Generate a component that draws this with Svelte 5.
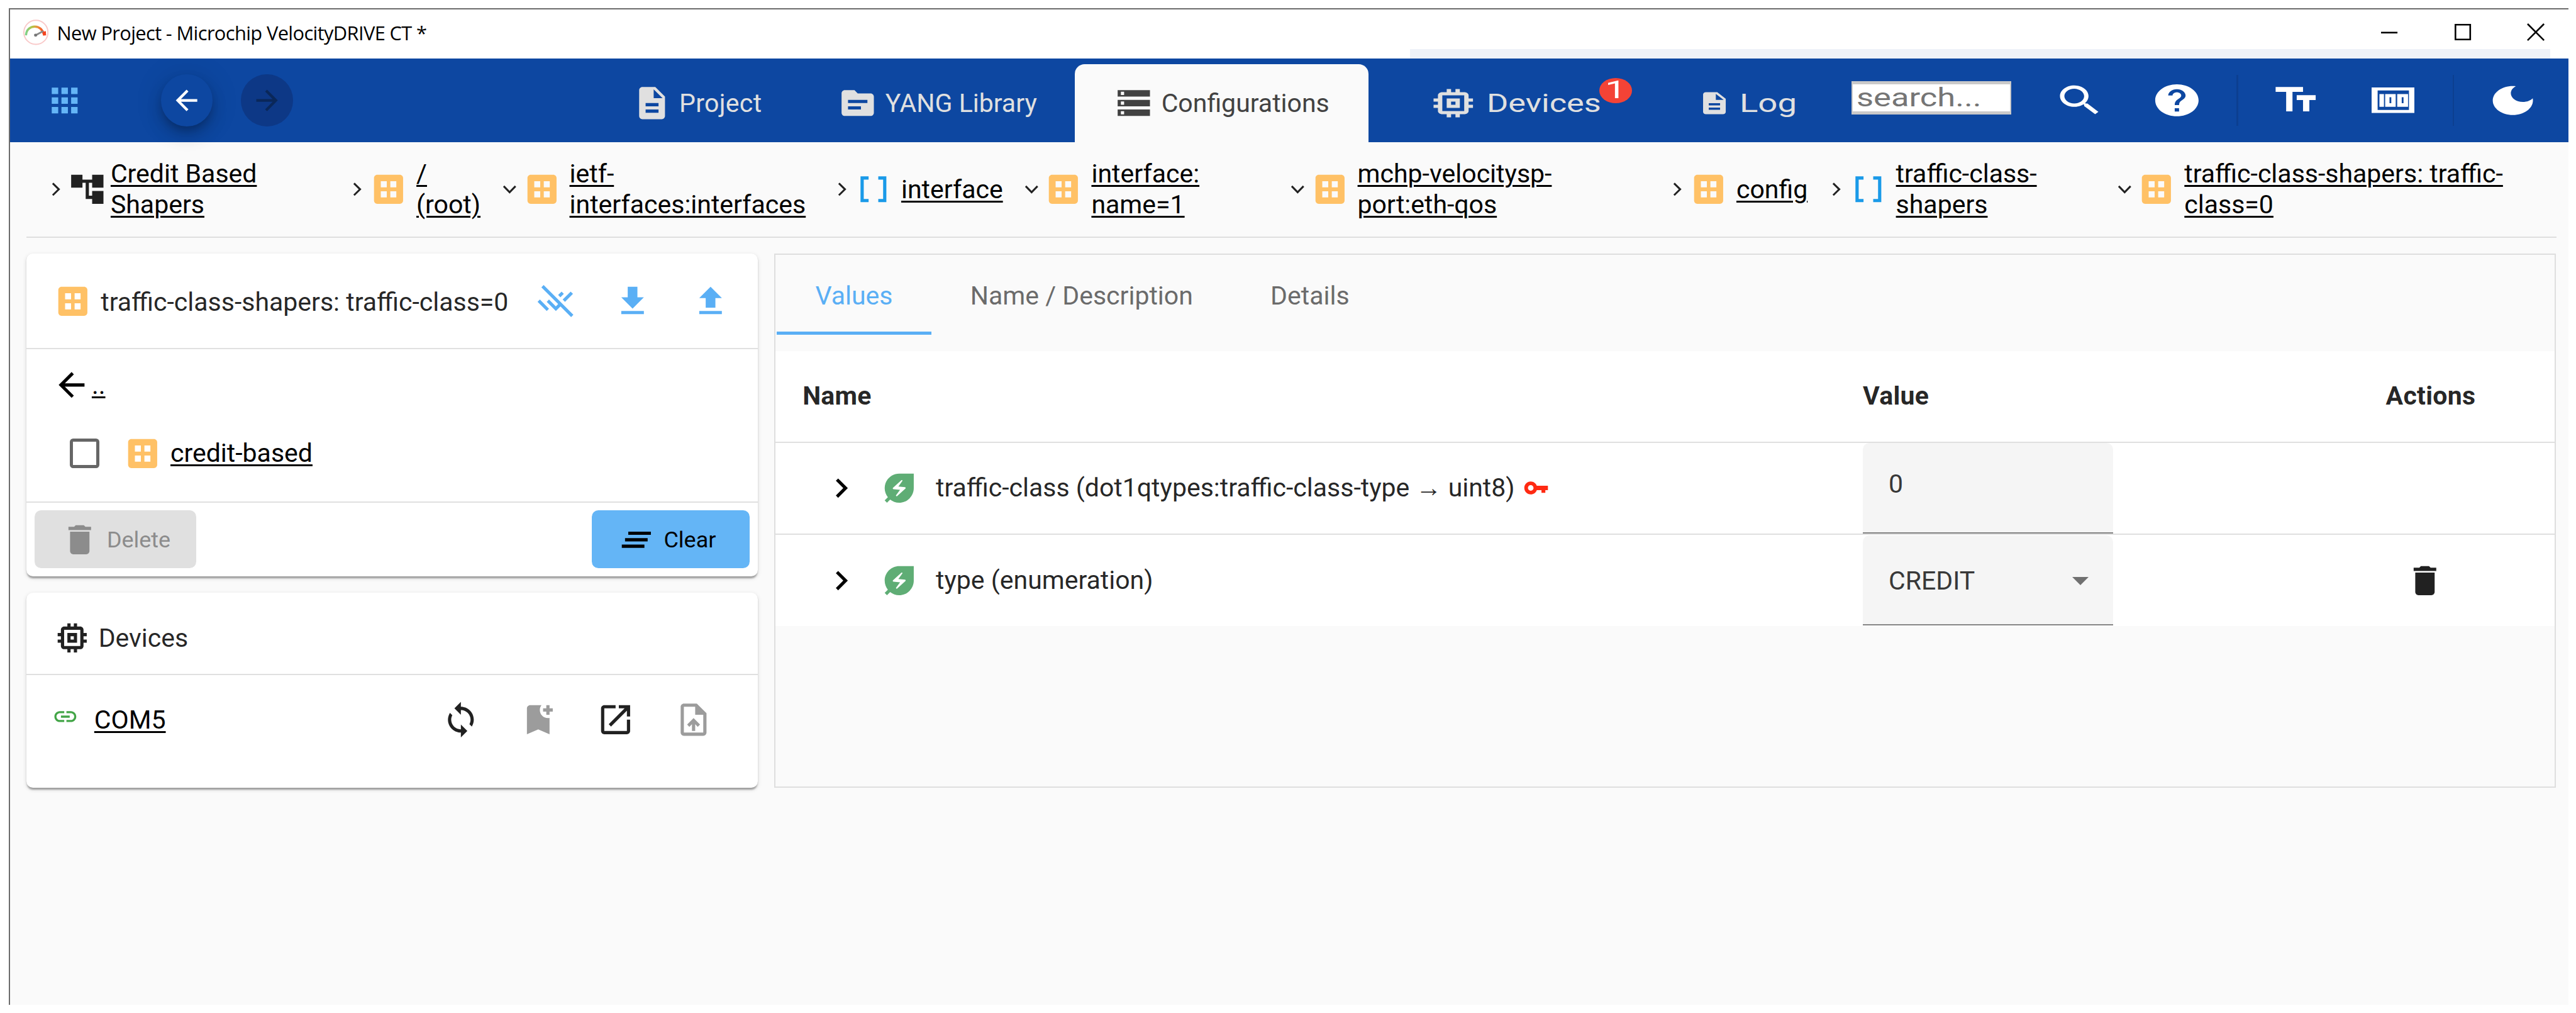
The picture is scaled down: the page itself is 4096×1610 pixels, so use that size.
<script>
  const icons = {
    apps: 'M4 8h4V4H4v4zm6 12h4v-4h-4v4zm-6 0h4v-4H4v4zm0-6h4v-4H4v4zm6 0h4v-4h-4v4zm6-10v4h4V4h-4zm-6 4h4V4h-4v4zm6 6h4v-4h-4v4zm0 6h4v-4h-4v4z',
    back: 'M20 11H7.83l5.59-5.59L12 4l-8 8 8 8 1.41-1.41L7.83 13H20v-2z',
    forward: 'M12 4l-1.41 1.41L16.17 11H4v2h12.17l-5.58 5.59L12 20l8-8z',
    description: 'M14 2H6c-1.1 0-1.99.9-1.99 2L4 20c0 1.1.89 2 1.99 2H18c1.1 0 2-.9 2-2V8l-6-6zm2 16H8v-2h8v2zm0-4H8v-2h8v2zm-3-5V3.5L18.5 9H13z',
    topic: 'M20 6h-8l-2-2H4c-1.1 0-1.99.9-1.99 2L2 18c0 1.1.9 2 2 2h16c1.1 0 2-.9 2-2V8c0-1.1-.9-2-2-2zm-6 10H6v-2h8v2zm4-4H6v-2h12v2z',
    storage: 'M2 20h20v-4H2v4zm2-3h2v2H4v-2zM2 4v4h20V4H2zm4 3H4V5h2v2zm-4 7h20v-4H2v4zm2-3h2v2H4v-2z',
    memory: 'M15 9H9v6h6V9zm-2 4h-2v-2h2v2zm8-2V9h-2V7c0-1.1-.9-2-2-2h-2V3h-2v2h-2V3H9v2H7c-1.1 0-2 .9-2 2v2H3v2h2v2H3v2h2v2c0 1.1.9 2 2 2h2v2h2v-2h2v2h2v-2h2c1.1 0 2-.9 2-2v-2h2v-2h-2v-2h2zm-4 6H7V7h10v10z',
    search: 'M15.5 14h-.79l-.28-.27C15.41 12.59 16 11.11 16 9.5 16 5.91 13.09 3 9.5 3S3 5.91 3 9.5 5.91 16 9.5 16c1.61 0 3.09-.59 4.23-1.57l.27.28v.79l5 4.99L20.49 19l-4.99-5zm-6 0C7.01 14 5 11.99 5 9.5S7.01 5 9.5 5 14 7.01 14 9.5 11.99 14 9.5 14z',
    help: 'M12 2C6.48 2 2 6.48 2 12s4.48 10 10 10 10-4.48 10-10S17.52 2 12 2zm1 17h-2v-2h2v2zm2.07-7.75l-.9.92C13.45 12.9 13 13.5 13 15h-2v-.5c0-1.1.45-2.1 1.17-2.83l1.24-1.26c.37-.36.59-.86.59-1.41 0-1.1-.9-2-2-2s-2 .9-2 2H8c0-2.21 1.79-4 4-4s4 1.79 4 4c0 .88-.36 1.68-.93 2.25z',
    textsize: 'M2.5 4v3h5v12h3V7h5V4h-13zm19 5h-9v3h3v7h3v-7h3V9z',
    moon: 'M12 3c-4.97 0-9 4.03-9 9s4.03 9 9 9 9-4.03 9-9c0-.46-.04-.92-.1-1.36-.98 1.37-2.58 2.26-4.4 2.26-2.98 0-5.4-2.42-5.4-5.4 0-1.81.89-3.42 2.26-4.4-.44-.06-.9-.1-1.36-.1z',
    tree: 'M22 11V3h-7v3H9V3H2v8h7V8h2v10h4v3h7v-8h-7v3h-2V8h2v3z',
    container: 'M5 3h14c1.1 0 2 .9 2 2v14c0 1.1-.9 2-2 2H5c-1.1 0-2-.9-2-2V5c0-1.1.9-2 2-2zM7.2 7v3.8h3.7V7zm5.9 0v3.8h3.7V7zM7.2 13.2V17h3.7v-3.8zm5.9 0V17h3.7v-3.8z',
    list: 'M15 4v2h3v12h-3v2h5V4zM4 20h5v-2H6V6h3V4H4z',
    uncheck: 'M4.84 1.98L3.43 3.39l10.38 10.38-1.41 1.41-4.24-4.24-1.41 1.41 5.66 5.66 2.83-2.83 6.6 6.6 1.41-1.41zM18.05 12.36L23 7.4 21.57 6l-4.94 4.94zM17.34 7.4l-1.41-1.41-2.12 2.12 1.41 1.41zM1.08 12.35l5.66 5.66 1.41-1.41L2.49 10.94z',
    download: 'M5 20h14v-2H5v2zM19 9.5h-4V3H9v6.5H5l7 7z',
    upload: 'M5 20h14v-2H5v2zM5 10h4v6h6v-6h4l-7-7z',
    trash: 'M6 19c0 1.1.9 2 2 2h8c1.1 0 2-.9 2-2V7H6v12zM19 4h-3.5l-1-1h-5l-1 1H5v2h14V4z',
    clear: 'M5 13h14v-2H5v2zm-2 4h14v-2H3v2zM7 7v2h14V7H7z',
    link: 'M3.9 12c0-1.71 1.39-3.1 3.1-3.1h4V7H7c-2.76 0-5 2.24-5 5s2.24 5 5 5h4v-1.9H7c-1.71 0-3.1-1.39-3.1-3.1zM8 13h8v-2H8v2zm9-6h-4v1.9h4c1.71 0 3.1 1.39 3.1 3.1s-1.39 3.1-3.1 3.1h-4V17h4c2.76 0 5-2.24 5-5s-2.24-5-5-5z',
    sync: 'M12 4V1L8 5l4 4V6c3.31 0 6 2.69 6 6 0 1.01-.25 1.97-.7 2.8l1.46 1.46C19.54 15.03 20 13.57 20 12c0-4.42-3.58-8-8-8zm0 14c-3.31 0-6-2.69-6-6 0-1.01.25-1.97.7-2.8L5.24 7.74C4.46 8.97 4 10.43 4 12c0 4.42 3.58 8 8 8v3l4-4-4-4v3z',
    bookmark: 'M21 7h-2v2h-2V7h-2V5h2V3h2v2h2v2zM19 21l-7-3-7 3V5c0-1.1.9-2 2-2h7c-.63.84-1 1.87-1 3 0 2.76 2.24 5 5 5 .34 0 .68-.03 1-.1V21z',
    open: 'M19 19H5V5h7V3H5c-1.11 0-2 .9-2 2v14c0 1.1.89 2 2 2h14c1.1 0 2-.9 2-2v-7h-2v7zM14 3v2h3.59l-9.83 9.83 1.41 1.41L19 6.41V10h2V3h-7z',
    file: 'M14 2H6c-1.1 0-1.99.9-1.99 2L4 20c0 1.1.89 2 1.99 2H18c1.1 0 2-.9 2-2V8l-6-6zm4 18H6V4h7v5h5v11zM8 15.01l1.41 1.41L11 14.84V19h2v-4.16l1.59 1.59L16 15.01 12.01 11z',
    right: 'M8.59 16.59L13.17 12 8.59 7.41 10 6l6 6-6 6z',
    leaf: 'M12 3c-4.8 0-9 3.86-9 9 0 2.12.74 4.07 1.97 5.61L3 19.59 4.41 21l1.97-1.97C7.93 20.26 9.88 21 12 21c2.3 0 4.61-.88 6.36-2.64C20.12 16.61 21 14.3 21 12V3h-9zm3.83 9.26l-5.16 4.63c-.16.15-.41.14-.56-.01-.14-.14-.16-.36-.04-.52l2.44-3.33-4.05-.4c-.44-.04-.63-.59-.3-.89l5.16-4.63c.16-.15.41-.14.56.01.14.14.16.36.04.52l-2.44 3.33 4.05.4c.45.04.63.59.3.89z',
    key: 'M12.65 10C11.83 7.67 9.61 6 7 6c-3.31 0-6 2.69-6 6s2.69 6 6 6c2.61 0 4.83-1.67 5.65-4H17v2.6h3.6V14H23v-4H12.65zM7 14.6c-1.4 0-2.6-1.2-2.6-2.6s1.2-2.6 2.6-2.6 2.6 1.2 2.6 2.6-1.2 2.6-2.6 2.6z'
  };

  const crumbs = [
    { icon: 'tree', lines: ['Credit Based', 'Shapers'] },
    { icon: 'container', lines: ['/', '(root)'] },
    { icon: 'container', open: true, lines: ['ietf-', 'interfaces:interfaces'] },
    { icon: 'list', lines: ['interface'] },
    { icon: 'container', open: true, lines: ['interface:', 'name=1'] },
    { icon: 'container', open: true, lines: ['mchp-velocitysp-', 'port:eth-qos'] },
    { icon: 'container', lines: ['config'] },
    { icon: 'list', lines: ['traffic-class-', 'shapers'] },
    { icon: 'container', open: true, lines: ['traffic-class-shapers: traffic-', 'class=0'] }
  ];
</script>

{#snippet icon(name, cls = '')}
  <svg class="icon {cls}" viewBox="0 0 24 24" preserveAspectRatio="none" aria-hidden="true">
    <path fill-rule="evenodd" d={icons[name]} />
  </svg>
{/snippet}

<div class="window">
  <div class="titlebar">
    <svg class="logo" viewBox="0 0 42 42" aria-hidden="true">
      <defs>
        <linearGradient id="dial" x1="0" x2="1" y1="0" y2="0">
          <stop offset="0" stop-color="#7fd08a" />
          <stop offset=".35" stop-color="#b5c443" />
          <stop offset=".65" stop-color="#f08a3c" />
          <stop offset="1" stop-color="#f4431f" />
        </linearGradient>
      </defs>
      <circle cx="21" cy="21" r="20" fill="#fff" stroke="#f9c9c9" stroke-width="2" />
      <path d="M4.5 26C5 16 12 11.5 19 11.5S32 16 35 26" fill="none" stroke="url(#dial)" stroke-width="3.6" />
      <path d="M32.5 20l5 -1 .5 7h-5z" fill="#f4431f" />
      <path d="M20 26L33 19" stroke="#8a8a8a" stroke-width="3" />
      <circle cx="20.5" cy="25.7" r="2.6" fill="#777" />
    </svg>
    <span class="title">New Project - Microchip VelocityDRIVE CT *</span>
    <div class="controls">
      <svg viewBox="0 0 10 10"><path d="M0 5.3h10" /></svg>
      <svg viewBox="0 0 10 10"><path d="M.5.5h9v9h-9z" /></svg>
      <svg viewBox="0 0 10 10"><path d="M0 0l10 10M10 0L0 10" /></svg>
    </div>
    <div class="strip"></div>
  </div>

  <header>
    {@render icon('apps', 'apps')}
    <button class="round">{@render icon('back', 'nav')}</button>
    <button class="round off">{@render icon('forward', 'nav')}</button>
    <nav>
      <div class="tab project">{@render icon('description')}<span>Project</span></div>
      <div class="tab yang">{@render icon('topic')}<span>YANG Library</span></div>
      <div class="tab active">{@render icon('storage')}<span>Configurations</span></div>
      <div class="tab devices">
        {@render icon('memory', 'chip')}<span>Devices</span>
        <div class="badge"><b>1</b></div>
      </div>
      <div class="tab log">{@render icon('description', 'sheet')}<span>Log</span></div>
    </nav>
    <div class="search"><span>search...</span></div>
    {@render icon('search', 'find')}
    {@render icon('help', 'help')}
    <i class="rule"></i>
    {@render icon('textsize', 'textsize')}
    <svg class="counter" viewBox="0 0 72 42" preserveAspectRatio="none" aria-hidden="true">
      <path fill-rule="evenodd" d="M0 0h72v42H0zM10 5v32h52V5zM13 11h7.5v21H13zM22.5 11H40v21H22.5zM29.7 16v10h3V16zM42.5 11H60.5v21H42.5zM50 16v10h3V16z" />
    </svg>
    <i class="rule second"></i>
    {@render icon('moon', 'moon')}
  </header>

  <div class="crumbs">
    {#each crumbs as c}
      <div class="crumb">
        <svg class="caret" class:open={c.open} viewBox="0 0 15 15" aria-hidden="true"><path d="M5.7 4L9.4 7.6 5.7 11.2" /></svg>
        {@render icon(c.icon, c.icon)}
        <a class:tight={c.icon === 'tree'}>{#each c.lines as line}<span>{line}</span>{/each}</a>
      </div>
    {/each}
  </div>

  <main>
    <aside>
      <section class="card">
        <div class="head">
          {@render icon('container', 'container')}
          <span class="label">traffic-class-shapers: traffic-class=0</span>
          <div class="tools">
            {@render icon('uncheck', 'blue')}
            {@render icon('download', 'blue')}
            {@render icon('upload', 'blue')}
          </div>
        </div>
        <div class="body">
          <div class="up">{@render icon('back')}<a>..</a></div>
          <div class="entry"><i class="check"></i>{@render icon('container', 'container')}<a>credit-based</a></div>
        </div>
        <div class="foot">
          <button class="btn delete">{@render icon('trash')}Delete</button>
          <button class="btn clear">{@render icon('clear')}Clear</button>
        </div>
      </section>
      <section class="card second">
        <div class="head">{@render icon('memory')}<span>Devices</span></div>
        <div class="device">
          {@render icon('link', 'link')}
          <a>COM5</a>
          <div class="actions">
            {@render icon('sync')}
            {@render icon('bookmark', 'dim')}
            {@render icon('open')}
            {@render icon('file', 'dim')}
          </div>
        </div>
      </section>
    </aside>

    <section class="panel">
      <div class="tabs">
        <div class="on">Values</div>
        <div>Name / Description</div>
        <div>Details</div>
      </div>
      <div class="table">
        <div class="row th"><div class="name">Name</div><div>Value</div><div class="act">Actions</div></div>
        <div class="row">
          <div class="name">
            {@render icon('right', 'chev')}{@render icon('leaf', 'leaf')}
            <span>traffic-class (dot1qtypes:traffic-class-type → uint8)</span>
            {@render icon('key', 'key')}
          </div>
          <div><div class="field raised">0</div></div>
          <div class="act"></div>
        </div>
        <div class="row last">
          <div class="name">
            {@render icon('right', 'chev')}{@render icon('leaf', 'leaf')}
            <span>type (enumeration)</span>
          </div>
          <div><div class="field">CREDIT<i class="drop"></i></div></div>
          <div class="act remove">{@render icon('trash')}</div>
        </div>
      </div>
    </section>
  </main>
</div>

<style>
  :global(html) { font-size: 0.63776vw; }
  :global(body) { margin: 0; background: #fff; overflow: hidden; }
  .window, .window * { box-sizing: border-box; }
  .window {
    width: 155.8rem; height: 60.64rem; margin: .5rem 0 0 .53rem;
    border-top: .1rem solid #6c6c6c; border-left: .1rem solid #6c6c6c;
    background: #fafafa; color: rgba(0, 0, 0, .87);
    font: 400 1.57rem/1.87rem Roboto, "Liberation Sans", sans-serif;
    white-space: nowrap; display: flex; flex-direction: column;
  }
  button { font: inherit; border: 0; padding: 0; }
  .icon { width: 2.36rem; height: 2.36rem; fill: currentColor; flex: none; display: block; }
  a { color: #000; text-decoration: underline; text-decoration-thickness: .1rem; text-underline-offset: .14rem; }

  .titlebar { height: 2.98rem; background: #fff; display: flex; align-items: center; position: relative; padding-left: .82rem; flex: none; }
  .logo { width: 1.54rem; height: 1.56rem; margin-top: -.2rem; }
  .title { font: 1.18rem/1.6rem "Open Sans", "Noto Sans", sans-serif; letter-spacing: -.024rem; color: #000; margin: -.06rem 0 0 .5rem; }
  .controls { margin-left: auto; display: flex; gap: 3.46rem; margin-right: 1.48rem; margin-top: -.24rem; }
  .controls svg { width: 1rem; height: 1rem; stroke: #000; fill: none; overflow: visible; }
  .strip { position: absolute; bottom: 0; right: 1.1rem; width: 69.4rem; height: .56rem; background: #eef2f8; }

  header { height: 5.09rem; flex: none; background: #0d47a1; color: #fff; display: flex; align-items: center; padding-left: 2.16rem; }
  .apps { color: #64b5f6; }
  .round { width: 3.15rem; height: 3.15rem; border-radius: 50%; margin-left: 4.66rem; background: #0d47a1; color: #fff; display: grid; place-items: center; flex: none;
    box-shadow: 0 .3rem .5rem -.1rem rgba(0, 0, 0, .2), 0 .6rem 1rem rgba(0, 0, 0, .14), 0 .1rem 1.8rem rgba(0, 0, 0, .12); }
  .round.off { margin-left: 1.74rem; background: #0d3886; color: #0a2759; box-shadow: none; }
  .nav { width: 1.96rem; height: 1.96rem; }
  nav { display: flex; align-self: flex-end; margin-left: 18.3rem; height: 4.73rem; color: #e0e0e0; }
  .tab { display: flex; align-items: center; padding-left: 2.4rem; flex: none; position: relative; }
  .tab span { margin-left: .5rem; transform-origin: left; }
  .project { width: 12.51rem; }
  .project span { letter-spacing: .012rem; margin-left: .46rem; }
  .yang { width: 16.8rem; }
  .active { width: 17.88rem; background: #fafafa; color: #424242; border-radius: .6rem .6rem 0 0; }
  .devices { width: 20rem; padding-left: 3.55rem; }
  .chip { width: 3.2rem; height: 2.3rem; }
  .devices span { transform: scaleX(1.275); margin-left: .42rem; }
  .badge { position: absolute; left: 14.02rem; top: .83rem; width: 2rem; height: 1.53rem; border-radius: 50%; background: #f44336; color: #fff; display: grid; place-items: center; }
  .badge b { font: 400 1.48rem/1.53rem Roboto, sans-serif; transform: translateY(-.04rem) scaleX(1.55); }
  .log { width: 9.37rem; padding-left: 0; }
  .sheet { width: 2.07rem; height: 1.61rem; }
  .log span { transform: scaleX(1.33); margin-left: .49rem; }
  .search { width: 9.73rem; height: 2.03rem; margin-top: -.27rem; background: #fff; border: .18rem solid #c9c9c9; border-width: .22rem .1rem .2rem; padding-left: .25rem; color: #757575; line-height: 1.62rem; }
  .search span { display: inline-block; transform: scaleX(1.28); transform-origin: left; }
  .find { width: 3.21rem; height: 2.4rem; margin-left: 2.56rem; }
  .help { width: 3.17rem; height: 2.33rem; margin-left: 2.74rem; }
  .rule { width: .1rem; height: 3.1rem; background: #0c3f90; margin-left: 2.04rem; }
  .textsize { width: 3.08rem; height: 2.37rem; margin-left: 1.97rem; }
  .counter { width: 2.64rem; height: 1.55rem; fill: #fff; margin-left: 3.06rem; }
  .rule.second { margin-left: 2.3rem; }
  .moon { width: 3.26rem; height: 2.35rem; margin-left: 1.96rem; }

  .crumbs { height: 5.83rem; flex: none; margin: 0 .7rem 0 1rem; border-bottom: .1rem solid #dedede; display: grid; align-items: center;
    grid-template-columns: 18.33rem 9.32rem 20.19rem 11.58rem 16.2rem 23.06rem 9.71rem 17.56rem 1fr; padding-left: 1.04rem; }
  .crumb { display: flex; align-items: center; }
  .crumb a { display: flex; flex-direction: column; align-items: flex-start; margin-left: .51rem; line-height: 1.865rem; }
  .crumb a span { text-decoration: underline; text-decoration-thickness: .1rem; text-underline-offset: .14rem; }
  .crumb a { text-decoration: none; }
  .crumb a.tight { margin-left: .23rem; }
  .caret { width: 1.5rem; height: 1.5rem; fill: none; stroke: #222; stroke-width: 1.15; flex: none; }
  .caret.open { transform: rotate(90deg); }
  .container { color: #ffc166; }
  .list { color: #1a9ae8; }

  main { display: flex; margin: .95rem .74rem 0 .99rem; height: 32.5rem; }
  aside { width: 44.52rem; flex: none; display: flex; flex-direction: column; gap: .98rem; }
  .card { background: #fff; border-radius: .4rem; height: 19.67rem;
    box-shadow: 0 .2rem .1rem -.1rem rgba(0, 0, 0, .2), 0 .1rem .1rem rgba(0, 0, 0, .14), 0 .1rem .3rem rgba(0, 0, 0, .12); }
  .card .head { height: 5.82rem; border-bottom: .1rem solid #e0e0e0; display: flex; align-items: center; padding: .08rem 0 0 1.66rem; }
  .card .label { margin: .08rem 0 0 .52rem; }
  .tools { display: flex; gap: 2.38rem; margin-left: 1.65rem; }
  .blue { color: #5aaff5; }
  .body { height: 9.34rem; border-bottom: .1rem solid #e0e0e0; padding-top: .99rem; }
  .up { display: flex; align-items: center; padding-left: 1.59rem; height: 2.4rem; color: #000; }
  .up a { margin: .03rem 0 0 .04rem; }
  .entry { display: flex; align-items: center; height: 2.4rem; margin-top: 1.76rem; padding-left: 2.66rem; }
  .check { width: 1.79rem; height: 1.79rem; border: .2rem solid #666; border-radius: .2rem; margin-right: 1.46rem; }
  .entry a { margin-left: .51rem; }
  .foot { display: flex; justify-content: space-between; padding: .46rem .47rem 0 .52rem; }
  .btn { height: 3.53rem; border-radius: .4rem; display: flex; align-items: center; font-size: 1.375rem; line-height: 1.7rem; padding-top: .06rem; }
  .delete { width: 9.83rem; background: #e0e0e0; color: #8c8c8c; padding-left: 1.57rem; gap: .46rem; }
  .clear { width: 9.62rem; background: #64b5f6; color: #000; padding-left: 1.54rem; gap: .48rem; }
  .card.second { height: 11.87rem; }
  .second .head { height: 5.03rem; padding-top: .55rem; padding-left: 1.62rem; }
  .second .head span { margin: .06rem 0 0 .42rem; }
  .device { display: flex; align-items: center; height: 5.4rem; padding-left: 1.6rem; }
  .link { width: 1.6rem; height: 1.6rem; color: #43a547; margin-top: -.38rem; }
  .device a { margin: .04rem 0 0 .94rem; }
  .actions { margin-left: auto; margin-right: 2.73rem; display: flex; gap: 2.36rem; }
  .dim { color: #9c9c9c; }

  .panel { flex: 1; margin-left: 1rem; border: .1rem solid #dedede; }
  .tabs { display: flex; height: 4.88rem; color: #6b6b6b; padding-left: .08rem; }
  .tabs div { padding: 1.59rem 2.36rem 0; line-height: 1.9rem; }
  .tabs .on { color: #5aaff5; border-bottom: .2rem solid #5aaff5; }
  .table { background: #fff; margin-top: .98rem; }
  .row { display: grid; grid-template-columns: 66.2rem 27rem 1fr; height: 5.6rem; border-bottom: .1rem solid #e0e0e0; align-items: center; }
  .row.last { border-bottom: 0; height: 5.55rem; }
  .th { font-weight: 700; height: 5.58rem; letter-spacing: .01rem; }
  .th .name { padding-left: 1.66rem; }
  .name { display: flex; align-items: center; }
  .chev { margin-left: 2.84rem; color: #000; }
  .leaf { margin-left: 1.18rem; color: #5fad75; }
  .name span { margin-left: 1.03rem; }
  .key { width: 1.57rem; height: 1.57rem; margin-left: .5rem; color: #ff2a12; }
  .act { display: flex; justify-content: center; }
  .remove { padding-right: .68rem; }
  .field { width: 15.25rem; height: 5.5rem; background: #f5f5f5; border-bottom: .1rem solid #858585; border-radius: .4rem .4rem 0 0; display: flex; align-items: center; padding: .18rem 1.52rem 0 1.57rem; justify-content: space-between; color: #383838; }
  .raised { padding-bottom: .4rem; padding-top: 0; }
  .drop { border: .5rem solid transparent; border-top-color: #707070; border-bottom: 0; }
</style>
